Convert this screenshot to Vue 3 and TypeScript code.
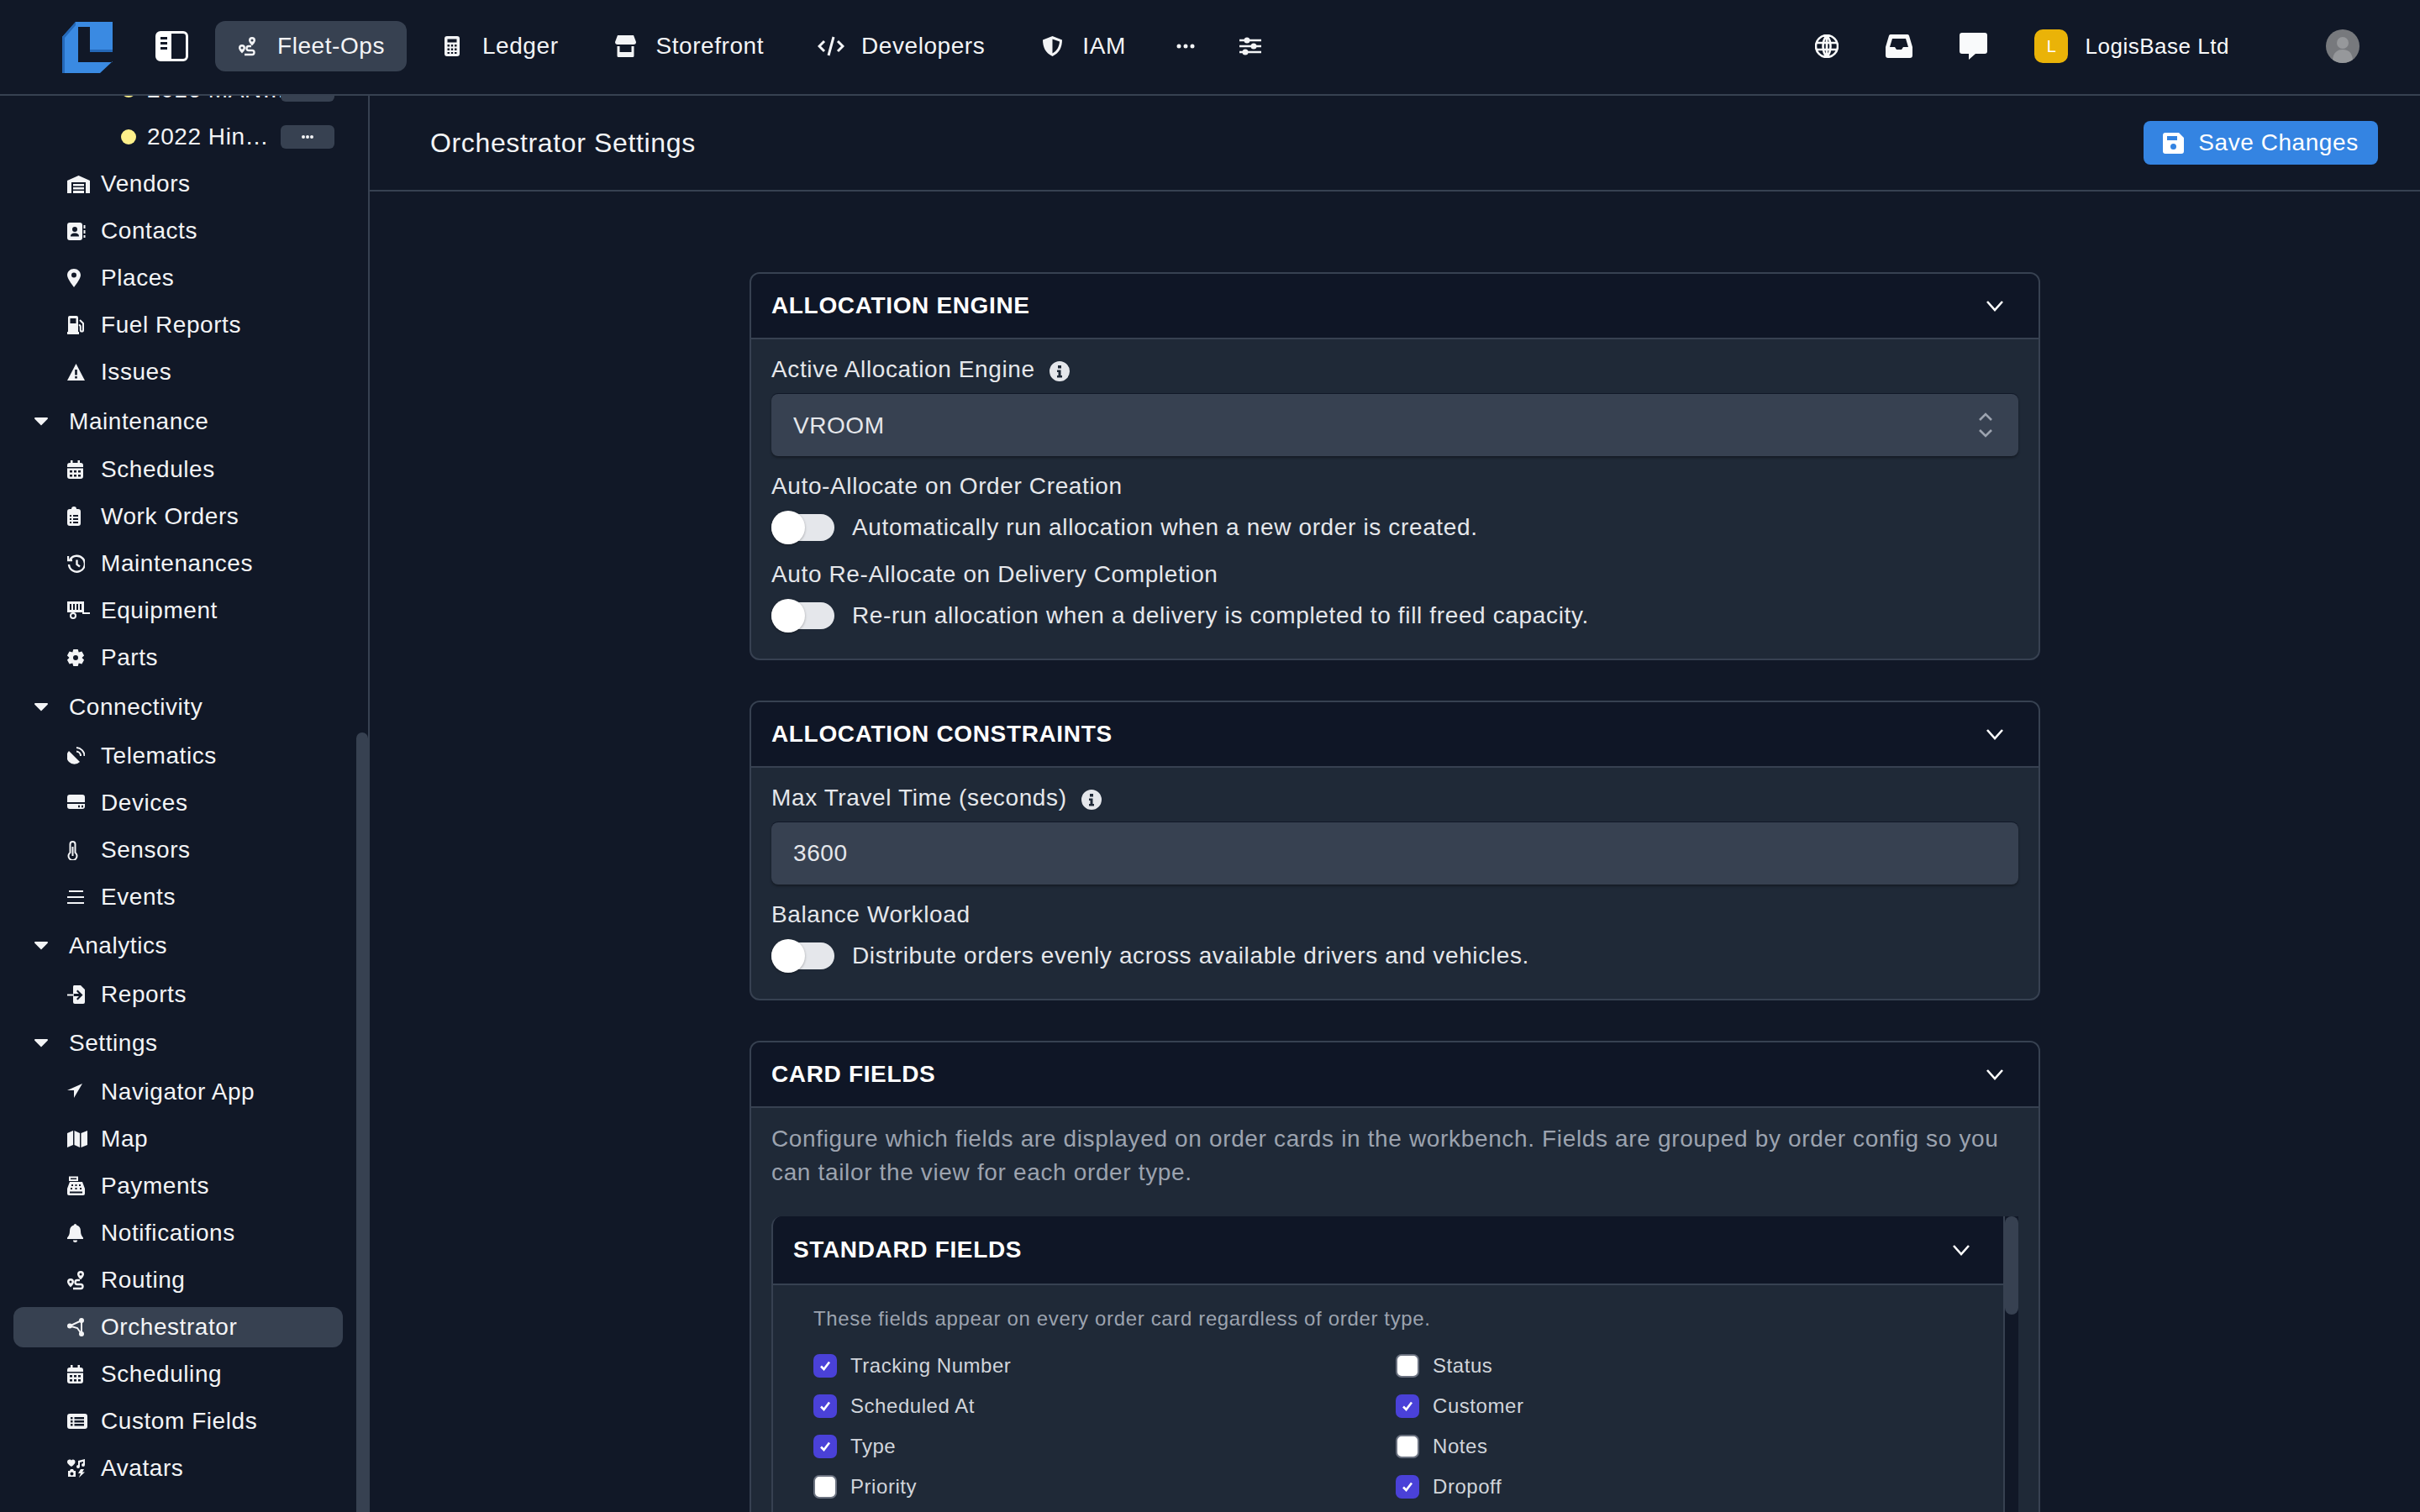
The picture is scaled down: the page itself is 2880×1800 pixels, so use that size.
<template>
  <div class="app">
    <header class="topbar">
      <svg class="logo" width="60" height="62" viewBox="0 0 60 62">
        <path fill="#3a8ae2" fill-rule="evenodd" d="M16 1H60V48L45 62H0V19ZM19 7V49H60V37H33V7Z" />
        <path fill="#2468b8" d="M33 34H60V37H33ZM0 19 16 1V5L3 20V62H0Z" />
      </svg>
      <button class="panel-btn"><Ic name="panel" /></button>
      <nav class="top-nav">
        <a v-for="item in topNav" :key="item.label" :class="['top-item', { active: item.active }]">
          <span class="top-icon"><Ic :name="item.icon" /></span>
          {{ item.label }}
        </a>
        <a class="top-more"><Ic name="dots" /></a>
        <a class="top-more"><Ic name="sliders" /></a>
      </nav>
      <div class="top-right">
        <Ic name="globe" />
        <Ic name="inbox" />
        <Ic name="chat" />
        <div class="org">
          <span class="org-badge">L</span>
          LogisBase Ltd
        </div>
        <svg class="user" width="40" height="40" viewBox="0 0 40 40">
          <circle cx="20" cy="20" r="20" fill="#77797d" />
          <circle cx="20" cy="16" r="7" fill="#96989b" />
          <path fill="#96989b" d="M8 36c1-9 6-12 12-12s11 3 12 12a20 20 0 0 1-24 0Z" />
        </svg>
      </div>
    </header>

    <div class="layout">
      <aside class="sidebar">
        <div class="side-list">
          <template v-for="row in sideRows" :key="row.label">
            <div v-if="row.kind === 'vehicle'" class="side-vehicle">
              <span class="dot"></span>
              <span class="vehicle-name">{{ row.label }}</span>
              <span class="vehicle-more"><Ic name="dots-sm" /></span>
            </div>
            <div v-else-if="row.kind === 'group'" class="side-group">
              <Ic name="caret" />
              <span>{{ row.label }}</span>
            </div>
            <div v-else :class="['side-item', { active: row.active }]">
              <span class="side-icon"><Ic :name="row.icon!" /></span>
              <span>{{ row.label }}</span>
            </div>
          </template>
        </div>
        <div class="side-scroll"><div class="side-thumb"></div></div>
      </aside>

      <main class="main">
        <div class="subheader">
          <h1 class="page-title">Orchestrator Settings</h1>
          <button class="save-btn"><Ic name="floppy" />Save Changes</button>
        </div>

        <div class="content">
          <section class="card">
            <div class="card-head">
              <h2>Allocation Engine</h2>
              <Ic name="chevron" />
            </div>
            <div class="card-body">
              <div class="field">
                <label class="label">Active Allocation Engine <Ic name="info" /></label>
                <div class="select-wrap">
                  <select class="control">
                    <option>VROOM</option>
                  </select>
                  <span class="select-arrows"><Ic name="updown" /></span>
                </div>
              </div>
              <div class="field">
                <label class="label">Auto-Allocate on Order Creation</label>
                <div class="toggle-row">
                  <span class="toggle"><span class="thumb"></span></span>
                  Automatically run allocation when a new order is created.
                </div>
              </div>
              <div class="field">
                <label class="label">Auto Re-Allocate on Delivery Completion</label>
                <div class="toggle-row">
                  <span class="toggle"><span class="thumb"></span></span>
                  Re-run allocation when a delivery is completed to fill freed capacity.
                </div>
              </div>
            </div>
          </section>

          <section class="card">
            <div class="card-head">
              <h2>Allocation Constraints</h2>
              <Ic name="chevron" />
            </div>
            <div class="card-body">
              <div class="field">
                <label class="label">Max Travel Time (seconds) <Ic name="info" /></label>
                <input class="control" value="3600" />
              </div>
              <div class="field">
                <label class="label">Balance Workload</label>
                <div class="toggle-row">
                  <span class="toggle"><span class="thumb"></span></span>
                  Distribute orders evenly across available drivers and vehicles.
                </div>
              </div>
            </div>
          </section>

          <section class="card">
            <div class="card-head">
              <h2>Card Fields</h2>
              <Ic name="chevron" />
            </div>
            <div class="card-body fields-body">
              <p class="desc">
                Configure which fields are displayed on order cards in the workbench. Fields are grouped by order config so you can tailor the view for each order type.
              </p>
              <div class="scroller">
                <div class="inner-card">
                  <div class="inner-head">
                    <h3>Standard Fields</h3>
                    <Ic name="chevron" />
                  </div>
                  <div class="inner-body">
                    <p class="note">These fields appear on every order card regardless of order type.</p>
                    <div class="check-grid">
                      <div v-for="field in standardFields" :key="field.label" class="check-row">
                        <span :class="['check', { on: field.on }]"><Ic v-if="field.on" name="check" /></span>
                        {{ field.label }}
                      </div>
                    </div>
                  </div>
                </div>
                <div class="inner-scroll"><div class="inner-thumb"></div></div>
              </div>
            </div>
          </section>
        </div>
      </main>
    </div>
  </div>
</template>

<script setup lang="ts">
import { h } from 'vue'
import type { FunctionalComponent } from 'vue'

interface IconDef {
  w: number
  h?: number
  fill?: string
  line?: string
  lw?: number
}

interface SideRow {
  kind: 'vehicle' | 'group' | 'item'
  label: string
  icon?: string
  active?: boolean
}

// six tooth cog, used for Parts
const gearPath = (cx: number, cy: number, outer: number, inner: number, hole: number): string => {
  let d = ''
  for (let i = 0; i < 6; i++) {
    const a = (i * Math.PI) / 3
    const pts = [
      [a - 0.52, inner],
      [a - 0.26, outer],
      [a + 0.26, outer],
      [a + 0.52, inner]
    ]
    for (const [t, r] of pts) {
      d += `${d ? 'L' : 'M'}${(cx + r * Math.sin(t)).toFixed(1)} ${(cy - r * Math.cos(t)).toFixed(1)}`
    }
  }
  return `${d}ZM${cx - hole} ${cy}a${hole} ${hole} 0 1 0 ${hole * 2} 0 ${hole} ${hole} 0 1 0-${hole * 2} 0Z`
}

const calendar: IconDef = {
  w: 19,
  fill: 'M4 1H6.5V4H12.5V1H15V4H16a3 3 0 0 1 3 3V9H0V7a3 3 0 0 1 3-3H4ZM0 10.5H19V20a3 3 0 0 1-3 3H3a3 3 0 0 1-3-3ZM3 13H6V15.5H3ZM8 13H11V15.5H8ZM13 13H16V15.5H13ZM3 18H6V20.5H3ZM8 18H11V20.5H8ZM13 18H16V20.5H13Z'
}

const icons: Record<string, IconDef> = {
  panel: {
    w: 39,
    h: 36,
    fill: 'M6 0H33a6 6 0 0 1 6 6V30a6 6 0 0 1-6 6H6a6 6 0 0 1-6-6V6a6 6 0 0 1 6-6ZM19 3V33H33a3 3 0 0 0 3-3V6a3 3 0 0 0-3-3ZM6 7H14V10H6ZM6 13H14V16H6ZM6 19H14V22H6Z'
  },
  route: {
    w: 21,
    fill: 'M4 10a4 4 0 0 0-4 4c0 2.5 4 6.5 4 6.5s4-4 4-6.5a4 4 0 0 0-4-4ZM4 12.5a1.5 1.5 0 1 1 0 3 1.5 1.5 0 0 1 0-3ZM16 1a4 4 0 0 0-4 4c0 2.5 4 6.5 4 6.5s4-4 4-6.5a4 4 0 0 0-4-4ZM16 3.5a1.5 1.5 0 1 1 0 3 1.5 1.5 0 0 1 0-3Z',
    line: 'M15 12H12a2.5 2.5 0 0 0 0 5H16a2.5 2.5 0 0 1 0 5H7',
    lw: 2.4
  },
  calculator: {
    w: 18,
    fill: 'M3 0H15a3 3 0 0 1 3 3V21a3 3 0 0 1-3 3H3a3 3 0 0 1-3-3V3a3 3 0 0 1 3-3ZM3.5 3.5H14.5V7.5H3.5ZM3.5 10H6V12.5H3.5ZM7.8 10H10.2V12.5H7.8ZM12 10H14.5V12.5H12ZM3.5 14.5H6V17H3.5ZM7.8 14.5H10.2V17H7.8ZM12 14.5H14.5V17H12ZM3.5 19H6V21H3.5ZM7.8 19H10.2V21H7.8ZM12 19H14.5V21H12Z'
  },
  store: {
    w: 25,
    h: 26,
    fill: 'M3 0H22L25 8a3 3 0 0 1-3 3H3a3 3 0 0 1-3-3ZM2.5 13H5.5V20H19.5V13H22.5V24.5a1.5 1.5 0 0 1-1.5 1.5H4a1.5 1.5 0 0 1-1.5-1.5Z'
  },
  code: { w: 32, line: 'M8 6 2 12 8 18M24 6 30 12 24 18M19 1 13 23', lw: 3 },
  shield: { w: 25, fill: 'M12.5 0 24 4.5C24 13 21 20 12.5 24 4 20 1 13 1 4.5ZM12.5 3.5V20.5C18 17.5 20.5 12.5 21 6.5Z' },
  dots: { w: 22, fill: 'M3 9.5a2.5 2.5 0 1 0 0 5 2.5 2.5 0 0 0 0-5ZM11 9.5a2.5 2.5 0 1 0 0 5 2.5 2.5 0 0 0 0-5ZM19 9.5a2.5 2.5 0 1 0 0 5 2.5 2.5 0 0 0 0-5Z' },
  'dots-sm': { w: 14, fill: 'M2 10a2 2 0 1 0 0 4 2 2 0 0 0 0-4ZM7 10a2 2 0 1 0 0 4 2 2 0 0 0 0-4ZM12 10a2 2 0 1 0 0 4 2 2 0 0 0 0-4Z' },
  sliders: {
    w: 26,
    fill: 'M9 1.5a3.5 3.5 0 1 0 0 7 3.5 3.5 0 0 0 0-7ZM17 8.5a3.5 3.5 0 1 0 0 7 3.5 3.5 0 0 0 0-7ZM7 15.5a3.5 3.5 0 1 0 0 7 3.5 3.5 0 0 0 0-7Z',
    line: 'M0 5H26M0 12H26M0 19H26',
    lw: 2.4
  },
  globe: {
    w: 28,
    h: 28,
    line: 'M14 1A13 13 0 1 0 14 27 13 13 0 1 0 14 1ZM2 10H26M2 18H26M14 1C8 8 8 20 14 27M14 1C20 8 20 20 14 27M14 1V27',
    lw: 2.6
  },
  inbox: {
    w: 32,
    h: 28,
    fill: 'M6 0H26a2 2 0 0 1 2 1.5L32 15V25a3 3 0 0 1-3 3H3a3 3 0 0 1-3-3V15L4 1.5A2 2 0 0 1 6 0ZM8 5 5 15H11L13 18H19L21 15H27L24 5Z'
  },
  chat: { w: 33, h: 32, fill: 'M3 0H30a3 3 0 0 1 3 3V22a3 3 0 0 1-3 3H19L11 32V25H3a3 3 0 0 1-3-3V3a3 3 0 0 1 3-3Z' },
  floppy: {
    w: 25,
    h: 25,
    fill: 'M3 0H19L25 6V22a3 3 0 0 1-3 3H3a3 3 0 0 1-3-3V3a3 3 0 0 1 3-3ZM5 4V9H17V4ZM12.5 13a3.5 3.5 0 1 0 0 7 3.5 3.5 0 0 0 0-7Z'
  },
  info: { w: 24, fill: 'M12 0a12 12 0 1 0 0 24 12 12 0 0 0 0-24ZM10 5h4v3.5h-4ZM9 10.5h4.5V17H15v2.5H9V17h1.5v-4H9Z' },
  chevron: { w: 22, h: 14, line: 'M2 2 11 12 20 2', lw: 2.6 },
  updown: { w: 18, h: 30, line: 'M2 9 9 2 16 9M2 21 9 28 16 21', lw: 2.6 },
  check: { w: 16, h: 16, line: 'M3 8.5 6.5 12 13 3.5', lw: 2.6 },
  caret: { w: 16, h: 10, fill: 'M1 0H15a1 1 0 0 1 .7 1.7L8 9.5.3 1.7A1 1 0 0 1 1 0Z' },
  warehouse: { w: 27, fill: 'M0 8 13.5 2 27 8V23H22V10H5V23H0ZM7 12H20V14.5H7ZM7 16H20V18.5H7ZM7 20H20V23H7Z' },
  contacts: {
    w: 22,
    fill: 'M3 2H15a3 3 0 0 1 3 3V20a3 3 0 0 1-3 3H3a3 3 0 0 1-3-3V5a3 3 0 0 1 3-3ZM9 7a3 3 0 1 0 0 6 3 3 0 0 0 0-6ZM4 18.5H14c0-3-2-4-5-4s-5 1-5 4ZM19.5 5H21.5V9H19.5ZM19.5 11H21.5V15H19.5ZM19.5 17H21.5V20H19.5Z'
  },
  pin: { w: 16, fill: 'M8 1C3.6 1 0 4.4 0 8.5 0 13 8 23 8 23s8-10 8-14.5C16 4.4 12.4 1 8 1ZM8 5.5a3 3 0 1 1 0 6 3 3 0 0 1 0-6Z' },
  fuel: {
    w: 22,
    fill: 'M1 3a2 2 0 0 1 2-2H11a2 2 0 0 1 2 2V20H14V23H0V20H1ZM3.5 4V10H10.5V4Z',
    line: 'M15 6l4 4V18a1.6 1.6 0 0 1-3.2 0V14a2 2 0 0 0-2-2'
  },
  warning: { w: 21, fill: 'M10.5 2 21 22H0ZM9.2 9H11.8V15.5H9.2ZM9.2 17H11.8V19.5H9.2Z' },
  calendar,
  clipboard: {
    w: 16,
    fill: 'M5 3a3 3 0 0 1 6 0H13a3 3 0 0 1 3 3V20a3 3 0 0 1-3 3H3a3 3 0 0 1-3-3V6a3 3 0 0 1 3-3ZM3 10H5V12H3ZM7 10H13V12H7ZM3 14H5V16H3ZM7 14H13V16H7ZM3 18H5V20H3ZM7 18H13V20H7Z'
  },
  history: { w: 21, line: 'M3.5 7A9.5 9.5 0 1 1 2 13M1 3V8H6M11.5 7.5V13L15 15.5', lw: 2.4 },
  trailer: {
    w: 27,
    fill: 'M0 1H20V14H0ZM3 4H5V11H3ZM7 4H9V11H7ZM11 4H13V11H11ZM15 4H17V11H15Z',
    line: 'M10 18a3 3 0 1 1-6 0 3 3 0 1 1 6 0ZM18 15H27'
  },
  gear: { w: 20, fill: gearPath(10, 12, 10.5, 7.5, 3) },
  satellite: {
    w: 21,
    fill: 'M2 6 15 19A8.5 8.5 0 0 1 2 6Z',
    line: 'M11 2A10 10 0 0 1 20.5 12M11 6.5A5.5 5.5 0 0 1 16 12'
  },
  drive: { w: 21, fill: 'M3 2H18a3 3 0 0 1 3 3V11H0V5a3 3 0 0 1 3-3ZM0 13H21V16a3 3 0 0 1-3 3H3a3 3 0 0 1-3-3ZM13 14.8h2v2.4h-2ZM17 14.8h2v2.4h-2Z' },
  thermo: { w: 13, fill: 'M5.5 8H7.5V19H5.5Z', line: 'M3.5 15V5a3 3 0 0 1 6 0V15a5 5 0 1 1-6 0Z' },
  bars: { w: 21, line: 'M2 5H19M0 12H20M0 19H20' },
  fileimport: {
    w: 21,
    fill: 'M8 1H16L21 6V21a2 2 0 0 1-2 2H9a2 2 0 0 1-2-2V14H14l-3 3 1.5 1.5 6-6-6-6L11 8l3 3H7V3a2 2 0 0 1 1-2Z',
    line: 'M0 12.5H8'
  },
  arrow: { w: 18, fill: 'M18 2 0 10H8V19Z' },
  map: { w: 24, fill: 'M0 5 7 2V19L0 22ZM8.5 2 15 5V22L8.5 19ZM16.5 5 24 2V19L16.5 22Z' },
  register: {
    w: 21,
    fill: 'M3 7H18L21 15V21a2 2 0 0 1-2 2H2a2 2 0 0 1-2-2V15ZM5 10h2v2H5ZM9.5 10h2v2h-2ZM14 10h2v2h-2ZM4 14h2v2H4ZM9.5 14h2v2h-2ZM15 14h2v2h-2ZM3 18.5H18V20.5H3Z',
    line: 'M3 1.5H12V5H3Z'
  },
  bell: { w: 19, fill: 'M9.5 1a1.6 1.6 0 0 1 1.6 1.6C14.5 3.5 16 6 16 9.5c0 4 1 5.5 3 8V19H0V17.5c2-2.5 3-4 3-8C3 6 4.5 3.5 7.9 2.6A1.6 1.6 0 0 1 9.5 1ZM7 20.5H12a2.5 2.5 0 0 1-5 0Z' },
  nodes: {
    w: 20,
    fill: 'M17 1a3 3 0 1 0 0 6 3 3 0 0 0 0-6ZM3 7.5a3 3 0 1 0 0 6 3 3 0 0 0 0-6ZM17 17a3 3 0 1 0 0 6 3 3 0 0 0 0-6Z',
    line: 'M17 4 3 10.5 12 13 17 20Z'
  },
  list: { w: 24, fill: 'M3 3H21a3 3 0 0 1 3 3V18a3 3 0 0 1-3 3H3a3 3 0 0 1-3-3V6a3 3 0 0 1 3-3ZM4 7H6.5V9.5H4ZM8.5 7H20V9.5H8.5ZM4 11H6.5V13.5H4ZM8.5 11H20V13.5H8.5ZM4 15H6.5V17.5H4ZM8.5 15H20V17.5H8.5Z' },
  shapes: { w: 21, fill: 'M5 2.5C6 1 9.5 1 9.5 4.5 9.5 7 5 10 5 10S0 7 0 4.5C0 1 4 1 5 2.5ZM13 3 21 1V8a2 2 0 1 1-2-2V4L15 5V10a2 2 0 1 1-2-2ZM1 15H3L4 13H7L8 15H10V22H1ZM5.5 16.5a2 2 0 1 0 0 4 2 2 0 0 0 0-4ZM16 13H20L18 16.5H21L14 23 16 18H13Z' }
}

const Ic: FunctionalComponent<{ name: string }> = ({ name }) => {
  const icon = icons[name]
  const height = icon.h ?? 24
  return h('svg', { class: 'ic', width: icon.w, height, viewBox: `0 0 ${icon.w} ${height}` }, [
    icon.fill ? h('path', { d: icon.fill, fill: 'currentColor', 'fill-rule': 'evenodd' }) : null,
    icon.line
      ? h('path', { d: icon.line, fill: 'none', stroke: 'currentColor', 'stroke-width': icon.lw ?? 2 })
      : null
  ])
}
Ic.props = ['name']

const topNav = [
  { label: 'Fleet-Ops', icon: 'route', active: true },
  { label: 'Ledger', icon: 'calculator' },
  { label: 'Storefront', icon: 'store' },
  { label: 'Developers', icon: 'code' },
  { label: 'IAM', icon: 'shield' }
]

const sideRows: SideRow[] = [
  { kind: 'vehicle', label: '2016 MAN…' },
  { kind: 'vehicle', label: '2022 Hin…' },
  { kind: 'item', label: 'Vendors', icon: 'warehouse' },
  { kind: 'item', label: 'Contacts', icon: 'contacts' },
  { kind: 'item', label: 'Places', icon: 'pin' },
  { kind: 'item', label: 'Fuel Reports', icon: 'fuel' },
  { kind: 'item', label: 'Issues', icon: 'warning' },
  { kind: 'group', label: 'Maintenance' },
  { kind: 'item', label: 'Schedules', icon: 'calendar' },
  { kind: 'item', label: 'Work Orders', icon: 'clipboard' },
  { kind: 'item', label: 'Maintenances', icon: 'history' },
  { kind: 'item', label: 'Equipment', icon: 'trailer' },
  { kind: 'item', label: 'Parts', icon: 'gear' },
  { kind: 'group', label: 'Connectivity' },
  { kind: 'item', label: 'Telematics', icon: 'satellite' },
  { kind: 'item', label: 'Devices', icon: 'drive' },
  { kind: 'item', label: 'Sensors', icon: 'thermo' },
  { kind: 'item', label: 'Events', icon: 'bars' },
  { kind: 'group', label: 'Analytics' },
  { kind: 'item', label: 'Reports', icon: 'fileimport' },
  { kind: 'group', label: 'Settings' },
  { kind: 'item', label: 'Navigator App', icon: 'arrow' },
  { kind: 'item', label: 'Map', icon: 'map' },
  { kind: 'item', label: 'Payments', icon: 'register' },
  { kind: 'item', label: 'Notifications', icon: 'bell' },
  { kind: 'item', label: 'Routing', icon: 'route' },
  { kind: 'item', label: 'Orchestrator', icon: 'nodes', active: true },
  { kind: 'item', label: 'Scheduling', icon: 'calendar' },
  { kind: 'item', label: 'Custom Fields', icon: 'list' },
  { kind: 'item', label: 'Avatars', icon: 'shapes' }
]

const standardFields = [
  { label: 'Tracking Number', on: true },
  { label: 'Status', on: false },
  { label: 'Scheduled At', on: true },
  { label: 'Customer', on: true },
  { label: 'Type', on: true },
  { label: 'Notes', on: false },
  { label: 'Priority', on: false },
  { label: 'Dropoff', on: true }
]
</script>

<style>
html,
body {
  margin: 0;
  background: #111827;
}
</style>

<style scoped>
.app {
  width: 2880px;
  height: 1800px;
  overflow: hidden;
  display: flex;
  flex-direction: column;
  background: #111827;
  color: #f3f4f6;
  font-family: "Liberation Sans", Arial, sans-serif;
}

/* tracking has to be worked out per element, em values inherit as px */
.app * {
  letter-spacing: 0.02em;
}

.ic {
  display: block;
  flex-shrink: 0;
}

/* top bar */
.topbar {
  flex: none;
  height: 114px;
  box-sizing: border-box;
  display: flex;
  align-items: center;
  padding: 0 72px 2px 74px;
  border-bottom: 2px solid #374151;
  font-size: 28px;
  color: #f3f4f6;
}

.logo {
  flex: none;
  margin-top: 2px;
}

.panel-btn {
  background: none;
  border: 0;
  padding: 0;
  color: #fff;
  margin: 0 32px 0 51px;
}

.top-nav {
  display: flex;
  align-items: center;
  gap: 16px;
}

.top-item {
  display: flex;
  align-items: center;
  gap: 24px;
  height: 60px;
  padding: 0 26px;
  border-radius: 12px;
  white-space: nowrap;
}

.top-item.active {
  background: #374151;
}

.top-icon {
  width: 24px;
  display: flex;
  justify-content: center;
}

.top-more {
  display: flex;
  padding: 0 16px 0 18px;
  color: #f3f4f6;
}

.top-more + .top-more {
  padding-left: 21px;
}

.top-right {
  margin-left: auto;
  display: flex;
  align-items: center;
  gap: 56px;
  color: #f9fafb;
}

.org {
  display: flex;
  align-items: center;
  gap: 20px;
  margin-right: 59px;
  font-size: 26px;
}

.org-badge {
  width: 40px;
  height: 40px;
  border-radius: 10px;
  background: #eab308;
  display: flex;
  align-items: center;
  justify-content: center;
  font-size: 20px;
  color: #fff;
}

.user {
  flex: none;
}

/* sidebar */
.layout {
  flex: 1;
  display: flex;
  min-height: 0;
}

.sidebar {
  flex: none;
  width: 440px;
  box-sizing: border-box;
  border-right: 2px solid #374151;
  display: flex;
  overflow: hidden;
}

.side-list {
  flex: 1;
  min-width: 0;
  margin-top: -31px;
  padding: 0 16px;
  display: flex;
  flex-direction: column;
  gap: 8px;
  font-size: 28px;
  color: #f3f4f6;
}

.side-item,
.side-vehicle {
  flex: none;
  height: 48px;
  display: flex;
  align-items: center;
  border-radius: 12px;
  white-space: nowrap;
}

.side-item {
  padding-left: 64px;
}

.side-item.active {
  background: #374151;
}

.side-icon {
  width: 40px;
  display: flex;
}

.side-vehicle {
  padding-left: 128px;
  padding-right: 10px;
}

.dot {
  flex: none;
  width: 18px;
  height: 18px;
  margin-right: 13px;
  border-radius: 50%;
  background: #fef08a;
}

.vehicle-name {
  flex: 1;
  min-width: 0;
  overflow: hidden;
}

.vehicle-more {
  flex: none;
  width: 64px;
  height: 28px;
  border-radius: 6px;
  background: #374151;
  display: flex;
  align-items: center;
  justify-content: center;
}

.side-group {
  flex: none;
  height: 51.25px;
  margin-top: 1px;
  padding-left: 25px;
  display: flex;
  align-items: center;
  gap: 25px;
}

.side-scroll {
  flex: none;
  width: 14px;
}

.side-thumb {
  height: 1000px;
  margin-top: 758px;
  border-radius: 8px 8px 0 0;
  background: #374151;
}

/* main area */
.main {
  flex: 1;
  min-width: 0;
  display: flex;
  flex-direction: column;
}

.subheader {
  flex: none;
  height: 114px;
  box-sizing: border-box;
  display: flex;
  align-items: center;
  justify-content: space-between;
  padding: 0 50px 0 72px;
  border-bottom: 2px solid #374151;
}

.page-title {
  margin: 0;
  font-size: 32px;
  font-weight: 400;
  color: #f3f4f6;
}

.save-btn {
  width: 279px;
  height: 52px;
  display: flex;
  align-items: center;
  justify-content: center;
  gap: 17px;
  border: 0;
  border-radius: 8px;
  background: #3484e2;
  color: #fff;
  font: inherit;
  font-size: 28px;
}

.content {
  flex: 1;
  width: 1536px;
  margin: 0 auto;
  padding-top: 96px;
  display: flex;
  flex-direction: column;
  gap: 48px;
}

.card {
  flex: none;
  box-sizing: border-box;
  border: 2px solid #374151;
  border-radius: 12px;
  overflow: hidden;
  background: #1f2937;
}

.card-head {
  height: 76px;
  display: flex;
  align-items: center;
  justify-content: space-between;
  padding: 0 41px 0 24px;
  background: #0f1626;
  border-bottom: 2px solid #374151;
  color: #fff;
}

.card-head h2,
.inner-head h3 {
  margin: 0;
  font-size: 28px;
  font-weight: 700;
  letter-spacing: 0.65px;
  text-transform: uppercase;
}

.card-body {
  padding: 18px 24px 31px;
  display: flex;
  flex-direction: column;
  gap: 18px;
}

.label {
  display: flex;
  align-items: center;
  gap: 17px;
  height: 36px;
  margin-bottom: 11px;
  font-size: 28px;
  letter-spacing: 0.62px;
  color: #e5e7eb;
}

.label .ic {
  margin-top: 3px;
}

.control {
  display: block;
  width: 100%;
  height: 74px;
  box-sizing: border-box;
  padding: 0 26px;
  border: 0;
  border-radius: 8px;
  background: #374151;
  box-shadow: 0 -1px 0 #111827, 0 2px 3px rgba(0, 0, 0, 0.35);
  color: #e5e7eb;
  font: inherit;
  font-size: 28px;
  appearance: none;
  outline: none;
}

.select-wrap {
  position: relative;
}

.select-arrows {
  position: absolute;
  top: 22px;
  right: 30px;
  color: #9ca3af;
}

.toggle-row {
  display: flex;
  align-items: center;
  gap: 21px;
  height: 40px;
  font-size: 28px;
  letter-spacing: 0.64px;
  color: #e5e7eb;
}

.toggle {
  position: relative;
  flex: none;
  width: 75px;
  height: 32px;
  border-radius: 16px;
  background: #e5e7eb;
}

.thumb {
  position: absolute;
  top: -4px;
  left: 0;
  width: 40px;
  height: 40px;
  border-radius: 50%;
  background: #fff;
  box-shadow: 0 1px 3px rgba(0, 0, 0, 0.3);
}

.fields-body {
  padding-top: 17px;
  gap: 32px;
}

.desc {
  margin: 0;
  font-size: 28px;
  line-height: 40px;
  letter-spacing: 0.65px;
  color: #9ca3af;
}

.scroller {
  display: flex;
}

.inner-card {
  flex: 1;
  min-width: 0;
  border: 2px solid #374151;
  border-top: 0;
  border-radius: 12px 0 0 0;
  overflow: hidden;
}

.inner-head {
  height: 80px;
  display: flex;
  align-items: center;
  justify-content: space-between;
  padding: 0 39px 0 24px;
  background: #0f1626;
  border-bottom: 2px solid #374151;
  color: #fff;
}

.inner-body {
  padding: 22px 46px 60px 48px;
}

.note {
  margin: 0 0 20px;
  font-size: 24px;
  line-height: 36px;
  letter-spacing: 0.65px;
  color: #9ca3af;
}

.check-grid {
  display: grid;
  grid-template-columns: repeat(2, 1fr);
  gap: 12px 16px;
}

.check-row {
  display: flex;
  align-items: center;
  gap: 16px;
  height: 36px;
  font-size: 24px;
  letter-spacing: 0.55px;
  color: #d1d5db;
}

.check {
  flex: none;
  width: 28px;
  height: 28px;
  box-sizing: border-box;
  display: flex;
  align-items: center;
  justify-content: center;
  border: 2px solid #6b7280;
  border-radius: 7px;
  background: #fff;
  color: #fff;
}

.check.on {
  border-color: #4a41d8;
  background: #4a41d8;
}

.inner-scroll {
  flex: none;
  width: 16px;
  background: #111827;
}

.inner-thumb {
  height: 117px;
  border-radius: 8px;
  background: #374151;
}
</style>
